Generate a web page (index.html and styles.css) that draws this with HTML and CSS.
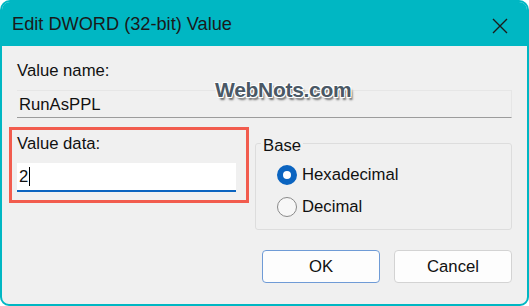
FILE: index.html
```html
<html lang="en">
<head>
  <meta charset="UTF-8" />
  <title>Edit DWORD (32-bit) Value</title>
  <link rel="stylesheet" href="styles.css">
</head>
<body>
  <div class="window">
    <!-- Barra de titulo -->
    <div class="titlebar">
      <span class="title">Edit DWORD (32-bit) Value</span>
      <svg class="close" width="16" height="16" viewBox="0 0 16 16">
        <path d="M1 1 L15 15 M15 1 L1 15" stroke="#1b1b1b" stroke-width="1.4" fill="none" />
      </svg>
    </div>

    <div class="content">
      <div class="label">Value name:</div>
      <div class="name-field">RunAsPPL</div>

      <div class="row">
        <!-- Caja resaltada -->
        <div class="data-box">
          <div class="label">Value data:</div>
          <div class="data-field">2<span class="caret"></span></div>
        </div>

        <fieldset class="base">
          <legend>Base</legend>
          <div class="radio-row">
            <span class="radio checked"></span>
            <span>Hexadecimal</span>
          </div>
          <div class="radio-row">
            <span class="radio"></span>
            <span>Decimal</span>
          </div>
        </fieldset>
      </div>

      <div class="buttons">
        <button class="btn default">OK</button>
        <button class="btn">Cancel</button>
      </div>
    </div>

    <!-- Marca de agua -->
    <div class="watermark">WebNots.com</div>
  </div>
</body>
</html>
```

FILE: styles.css
```css
/* Estilos generales */
body {
  margin: 0;
  padding: 0;
  background: #ffffff;
  font-family: "Liberation Sans", Arial, sans-serif;
}
.window {
  position: relative;
  box-sizing: border-box;
  width: 529px;
  height: 306px;
  border: 2px solid #00b7c3;
  border-radius: 10px 10px 9px 9px;
  background: #f0f0f0;
  overflow: hidden;
}
/* Barra de titulo */
.titlebar {
  height: 44px;
  background: #00b7c3;
  display: flex;
  align-items: center;
  justify-content: space-between;
  padding: 0 19px 0 10px;
  margin-top: -2px;
  padding-top: 2px;
}
.title {
  font-size: 18.2px;
  color: #1a1a1a;
}
.close {
  margin-top: 4px;
}
/* Contenido */
.content {
  padding: 16px 15px 0 15px;
  font-size: 16.7px;
  color: #111;
}
.label {
  line-height: 18px;
}
.name-field {
  margin-top: 10px;
  height: 28px;
  box-sizing: border-box;
  border-top: 1px solid #e6e6e6;
  border-right: 1px solid #e6e6e6;
  border-bottom: 1px solid #9c9c9c;
  padding: 4px 2px 0 2px;
  line-height: 20px;
}
.row {
  display: flex;
  align-items: flex-start;
  margin-top: 9px;
}
.data-box {
  margin-left: -8px;
  border: 3px solid #f25c4e;
  padding: 5px 10px 8px 5px;
}
.data-field {
  margin-top: 10px;
  width: 219px;
  height: 29px;
  box-sizing: border-box;
  background: #ffffff;
  border-bottom: 2px solid #0b64c0;
  padding: 4px 2px 0 2px;
  line-height: 20px;
}
.caret {
  display: inline-block;
  width: 1px;
  height: 19px;
  background: #000;
  vertical-align: -4px;
  margin-left: 1px;
}
/* Grupo de base */
.base {
  margin: 4px 0 0 6px;
  width: 257px;
  box-sizing: border-box;
  height: 99px;
  border: 1px solid #dddddd;
  border-radius: 3px;
  padding: 4px 0 0 21px;
}
.base legend {
  margin-left: -16px;
  padding: 6px 2px 0 2px;
  line-height: 18px;
}
.radio-row {
  display: flex;
  align-items: center;
  height: 32px;
}
.radio {
  width: 20px;
  height: 20px;
  box-sizing: border-box;
  border-radius: 50%;
  border: 1px solid #8a8a8a;
  background: #f7f7f7;
  margin-right: 5px;
}
.radio.checked {
  border: 6px solid #0b64c0;
  background: #ffffff;
}
/* Botones */
.buttons {
  display: flex;
  justify-content: flex-end;
  gap: 14px;
  margin-top: 20px;
}
.btn {
  width: 118px;
  height: 33px;
  background: #fdfdfd;
  border: 1px solid #d3d3d3;
  border-radius: 4px;
  font-family: "Liberation Sans", Arial, sans-serif;
  font-size: 16.7px;
  color: #111;
}
.btn.default {
  border-color: #6f9bd6;
}
.watermark {
  position: absolute;
  left: 213px;
  top: 76px;
  font-size: 21px;
  font-weight: bold;
  color: #4a5865;
  letter-spacing: -0.3px;
  text-shadow: -1px -1px 0 #fff, 1px -1px 0 #fff, -1px 1px 0 #fff, 1px 1px 0 #fff, 2px 3px 2px rgba(0, 0, 0, 0.55);
}
```
